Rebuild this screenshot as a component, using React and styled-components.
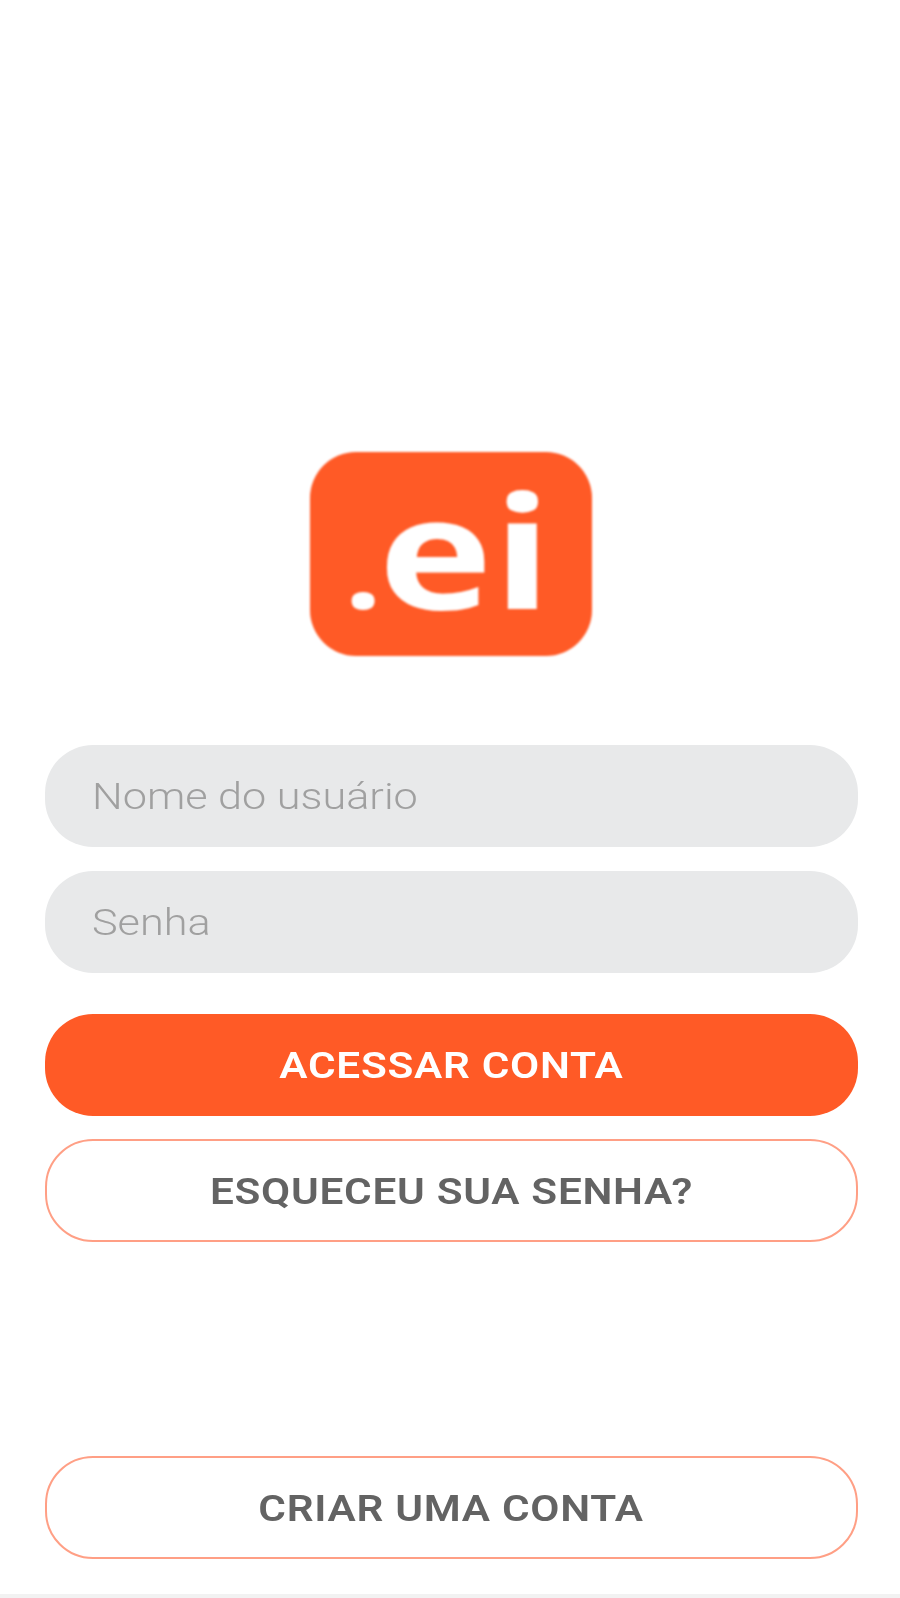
import React from "react";
import styled, { createGlobalStyle } from "styled-components";

const Global = createGlobalStyle`
  html, body { margin: 0; padding: 0; background: #ffffff; }
  * { box-sizing: border-box; }
`;

const Screen = styled.main`
  width: 900px;
  height: 1598px;
  padding: 452px 42px 0 45px;
  display: flex;
  flex-direction: column;
  align-items: stretch;
  background: linear-gradient(#fff 0, #fff 1594px, #f2f2f2 1594px);
  font-family: Roboto, "Liberation Sans", sans-serif;
`;

const Logo = styled.div`
  align-self: center;
  width: 282px;
  height: 204px;
  margin-left: -2px;
  border-radius: 46px;
  background: #ff5a26;
  color: #fff;
  font-family: "Open Sans", sans-serif;
  font-weight: 700;
  font-size: 156px;
  line-height: 204px;
  text-align: center;
  filter: blur(0.8px);
  margin-bottom: 89px;
`;

const LogoMark = styled.span`
  display: inline-block;
  transform: translate(-3px, -5px) scaleX(1.24);
`;

const LogoDot = styled.span`
  font-size: 108px;
  letter-spacing: -3px;
`;

const Field = styled.div`
  display: flex;
  align-items: center;
  width: 100%;
  height: 102px;
  border-radius: 48px;
  background: #e8e9ea;
  padding: 0 47px;
  margin-bottom: 24px;
  filter: blur(0.7px);
`;

const Hint = styled.span`
  display: inline-block;
  font-family: Roboto, sans-serif;
  font-weight: 350;
  font-size: 36px;
  color: #a0a0a0;
  transform-origin: left center;
  transform: translateY(1px) scaleX(1.2);
`;

const Button = styled.button`
  display: block;
  width: 100%;
  height: ${(p) => (p.$primary ? 102 : 103)}px;
  flex: none;
  border-radius: 48px;
  border: ${(p) => (p.$primary ? "0" : "2px solid #ff9f85")};
  background: ${(p) => (p.$primary ? "#ff5a26" : "#fff")};
  color: ${(p) => (p.$primary ? "#fff" : "#636363")};
  font-family: Roboto, sans-serif;
  font-weight: 600;
  font-size: 36px;
  filter: blur(0.7px);
  margin-top: ${(p) => p.$top || 0}px;
`;

const Label = styled.span`
  display: inline-block;
  transform: translateY(1px) scaleX(1.175);
  letter-spacing: 0.6px;
`;

export default function App() {
  return (
    <>
      <Global />
      <Screen>
        <Logo><LogoMark><LogoDot>.</LogoDot>ei</LogoMark></Logo>
        <Field><Hint>Nome do usuário</Hint></Field>
        <Field><Hint>Senha</Hint></Field>
        <Button $primary $top={17}><Label>ACESSAR CONTA</Label></Button>
        <Button $top={23}><Label>ESQUECEU SUA SENHA?</Label></Button>
        <Button $top={214}><Label>CRIAR UMA CONTA</Label></Button>
      </Screen>
    </>
  );
}
